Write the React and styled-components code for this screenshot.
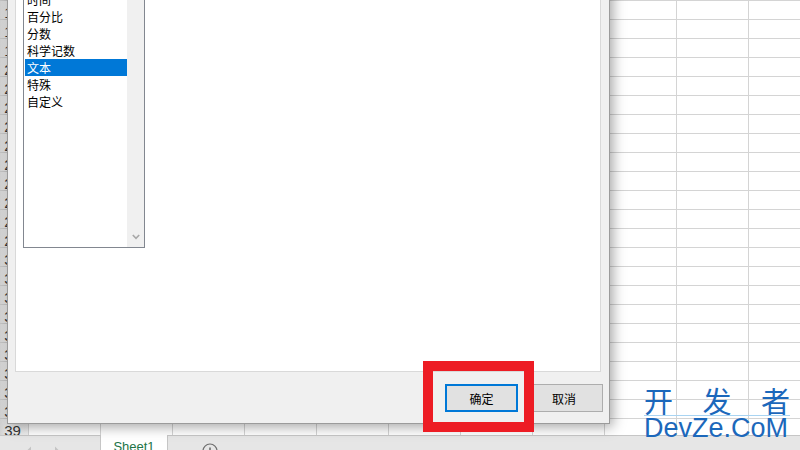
import styled, { createGlobalStyle } from 'styled-components';

const GlobalStyle = createGlobalStyle`
  html, body {
    margin: 0;
    padding: 0;
    background: #fff;
  }
  body {
    font-family: "Noto Sans CJK SC", "Noto Sans", sans-serif;
  }
`;

const ROW_NUMBERS = Array.from({ length: 23 }, (_, i) => 17 + i);

const CATEGORIES = [
  '常规',
  '数值',
  '货币',
  '会计专用',
  '日期',
  '时间',
  '百分比',
  '分数',
  '科学记数',
  '文本',
  '特殊',
  '自定义',
];

function App() {
  return (
    <>
      <GlobalStyle />
      <Screen>
        <Sheet>
          <GridArea>
            <RowHeaders>
              {ROW_NUMBERS.map((n) => (
                <RowHead key={n}>{n}</RowHead>
              ))}
            </RowHeaders>
            <Cells />
          </GridArea>
          <TabBar>
            <TabNav>
              <NavArrow dir="left" />
              <NavArrow dir="right" />
            </TabNav>
            <SheetTab>Sheet1</SheetTab>
            <AddSheet>
              <PlusIcon />
            </AddSheet>
          </TabBar>
        </Sheet>

        <Dialog>
          <DialogBody>
            <Panel>
              <CategoryList>
                <Items>
                  {CATEGORIES.map((c) => (
                    <Item key={c} selected={c === '文本'}>
                      {c}
                    </Item>
                  ))}
                </Items>
                <Scrollbar>
                  <ScrollDown>
                    <ChevronDown />
                  </ScrollDown>
                </Scrollbar>
              </CategoryList>
            </Panel>
          </DialogBody>
          <DialogFooter>
            <Button primary>确定</Button>
            <Button wide>取消</Button>
          </DialogFooter>
        </Dialog>

        <Highlight />

        <Watermark>
          <WatermarkTitle>开发者</WatermarkTitle>
          <WatermarkRule />
          <WatermarkSite>DevZe.CoM</WatermarkSite>
        </Watermark>
      </Screen>
    </>
  );
}

function NavArrow({ dir }) {
  return (
    <svg width="6" height="9" viewBox="0 0 6 9">
      {dir === 'left' ? (
        <path d="M5 0.5 L1 4.5 L5 8.5 Z" fill="#c4c4c4" />
      ) : (
        <path d="M1 0.5 L5 4.5 L1 8.5 Z" fill="#c4c4c4" />
      )}
    </svg>
  );
}

function PlusIcon() {
  return (
    <svg width="16" height="16" viewBox="0 0 16 16">
      <circle cx="8" cy="8" r="7" fill="none" stroke="#6e6e6e" strokeWidth="1.2" />
      <path d="M8 4.5 V11.5 M4.5 8 H11.5" stroke="#6e6e6e" strokeWidth="1.6" />
    </svg>
  );
}

function ChevronDown() {
  return (
    <svg width="8" height="6" viewBox="0 0 8 6">
      <path d="M0.8 1 L4 4.4 L7.2 1" fill="none" stroke="#a8a8a8" strokeWidth="1.6" />
    </svg>
  );
}

const Screen = styled.div`
  position: relative;
  width: 800px;
  height: 450px;
  overflow: hidden;
  background: #fff;
`;

const Sheet = styled.div`
  display: flex;
  flex-direction: column;
  width: 100%;
`;

const GridArea = styled.div`
  display: flex;
  height: 435px;
  overflow: hidden;
`;

const RowHeaders = styled.div`
  width: 28px;
  flex: none;
  display: flex;
  flex-direction: column;
  background: #dcdcdc;
`;

const RowHead = styled.div`
  height: 19px;
  flex: none;
  box-sizing: border-box;
  border-top: 1px solid #c3c3c3;
  display: flex;
  align-items: center;
  justify-content: center;
  padding: 4px 3px 0 0;
  font-family: "Liberation Sans", Arial, sans-serif;
  font-size: 15px;
  color: #333;
  background: linear-gradient(to right, #d2d2d2, #e8e8e8 8px, #efefef);
`;

const Cells = styled.div`
  flex: 1;
  background-color: #fff;
  background-image: linear-gradient(to right, #d4d4d4 1px, transparent 1px),
    linear-gradient(to bottom, #d4d4d4 1px, transparent 1px);
  background-size: 72px 19px;
`;

const TabBar = styled.div`
  height: 24px;
  display: flex;
  align-items: stretch;
  background: #e6e6e6;
  border-top: 1px solid #c6c6c6;
  box-sizing: border-box;
`;

const TabNav = styled.div`
  width: 100px;
  display: flex;
  align-items: center;
  gap: 22px;
  padding-left: 26px;
  padding-top: 6px;
  box-sizing: border-box;
`;

const SheetTab = styled.div`
  width: 68px;
  margin-top: -1px;
  box-sizing: border-box;
  background: #fff;
  border-left: 1px solid #c6c6c6;
  border-right: 1px solid #c6c6c6;
  display: flex;
  justify-content: center;
  padding-top: 4px;
  font-family: "Liberation Sans", Arial, sans-serif;
  font-size: 13px;
  color: #217346;
`;

const AddSheet = styled.div`
  margin-left: 34px;
  padding-top: 4px;
`;

const Dialog = styled.div`
  position: absolute;
  left: 7px;
  top: -140px;
  width: 603px;
  height: 564px;
  box-sizing: border-box;
  display: flex;
  flex-direction: column;
  background: #f0f0f0;
  border: 1px solid #9b9b9b;
  box-shadow: 3px 3px 12px rgba(0, 0, 0, 0.35);
`;

const DialogBody = styled.div`
  flex: 1;
  display: flex;
  padding: 0 8px 0 7px;
`;

const Panel = styled.div`
  flex: 1;
  background: #fff;
  border: 1px solid #d9d9d9;
  padding: 43px 0 0 7px;
`;

const CategoryList = styled.div`
  width: 122px;
  height: 343px;
  box-sizing: border-box;
  display: flex;
  border: 1px solid #828790;
  background: #fff;
`;

const Items = styled.div`
  flex: 1;
  padding-left: 1px;
`;

const Item = styled.div`
  height: 17px;
  line-height: 17px;
  padding-left: 2px;
  font-size: 12px;
  color: ${(p) => (p.selected ? '#fff' : '#000')};
  background: ${(p) => (p.selected ? '#0078d7' : 'transparent')};
  white-space: nowrap;
`;

const Scrollbar = styled.div`
  width: 17px;
  display: flex;
  flex-direction: column;
  justify-content: flex-end;
  background: #f0f0f0;
`;

const ScrollDown = styled.div`
  height: 17px;
  display: flex;
  align-items: center;
  justify-content: center;
  padding-bottom: 2px;
`;

const DialogFooter = styled.div`
  height: 51px;
  flex: none;
  box-sizing: border-box;
  display: flex;
  justify-content: flex-end;
  align-items: flex-start;
  gap: 7px;
  padding: 12px 6px 0 0;
`;

const Button = styled.div`
  width: ${(p) => (p.wide ? '78px' : '73px')};
  height: 28px;
  box-sizing: border-box;
  display: flex;
  align-items: center;
  justify-content: center;
  background: #e1e1e1;
  border: ${(p) => (p.primary ? '2px solid #0078d7' : '1px solid #adadad')};
  font-size: 12px;
  color: #000;
`;

const Highlight = styled.div`
  position: absolute;
  left: 423px;
  top: 361px;
  width: 111px;
  height: 71px;
  box-sizing: border-box;
  border: 10px solid #ed1c24;
`;

const Watermark = styled.div`
  position: absolute;
  left: 644px;
  top: 386px;
  width: 148px;
  display: flex;
  flex-direction: column;
  color: #1c68bb;
`;

const WatermarkTitle = styled.div`
  height: 29px;
  font-size: 29px;
  line-height: 29px;
  letter-spacing: 29.5px;
  white-space: nowrap;
`;

const WatermarkRule = styled.div`
  height: 1px;
  width: 146px;
  background: #a9d4f2;
`;

const WatermarkSite = styled.div`
  font-family: "Liberation Sans", Arial, sans-serif;
  font-size: 27px;
  line-height: 25px;
  white-space: nowrap;
`;

export default App;
